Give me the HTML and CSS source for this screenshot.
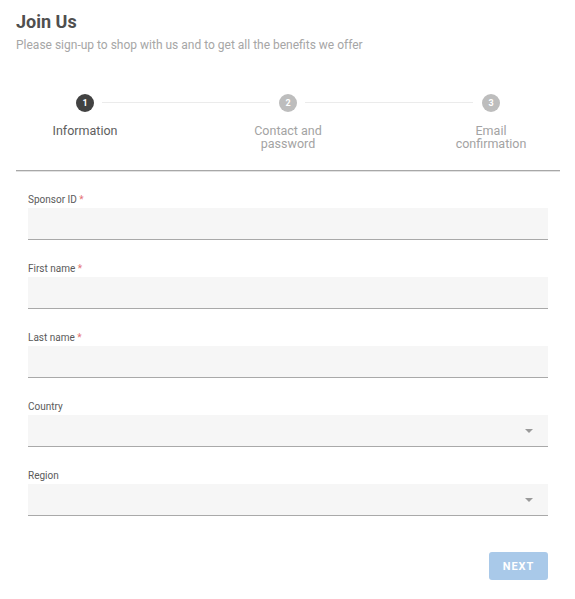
FILE: index.html
```html
<!DOCTYPE html>
<html>
<head>
<meta charset="utf-8">
<link rel="stylesheet" href="styles.css">
</head>
<body>
<div class="page">
  <h1 class="title">Join Us</h1>
  <p class="subtitle">Please sign-up to shop with us and to get all the benefits we offer</p>

  <div class="stepper">
    <div class="step active">
      <span class="circle">1</span>
      <span class="label">Information</span>
    </div>
    <div class="divider"></div>
    <div class="step">
      <span class="circle">2</span>
      <span class="label">Contact and<br>password</span>
    </div>
    <div class="divider"></div>
    <div class="step">
      <span class="circle">3</span>
      <span class="label">Email<br>confirmation</span>
    </div>
  </div>

  <form class="form">
    <div class="field">
      <label class="field-label">Sponsor ID <span class="req">*</span></label>
      <div class="input"></div>
    </div>
    <div class="field">
      <label class="field-label">First name <span class="req">*</span></label>
      <div class="input"></div>
    </div>
    <div class="field">
      <label class="field-label">Last name <span class="req">*</span></label>
      <div class="input"></div>
    </div>
    <div class="field">
      <label class="field-label">Country</label>
      <div class="input select"><span class="arrow"></span></div>
    </div>
    <div class="field">
      <label class="field-label">Region</label>
      <div class="input select"><span class="arrow"></span></div>
    </div>
    <div class="actions">
      <button type="button" class="next">NEXT</button>
    </div>
  </form>
</div>
</body>
</html>
```

FILE: styles.css
```css
* { box-sizing: border-box; }
html, body { margin: 0; padding: 0; background: #fff; }
body { font-family: Roboto, "Liberation Sans", Arial, sans-serif; }

.page { padding: 11px 15px 0 16px; width: 575px; }

.title {
  margin: 0;
  font-size: 18px;
  line-height: 21px;
  font-weight: 700;
  color: #4f4f4f;
}
.subtitle {
  margin: 6px 0 0;
  font-size: 12px;
  line-height: 14px;
  color: #a6a6a6;
}

.stepper {
  display: flex;
  align-items: flex-start;
  padding: 42px 0 20px;
  border-bottom: 1px solid #a8a8a8;
  position: relative;
}
.stepper::after {
  content: "";
  position: absolute;
  left: 0;
  right: 0;
  bottom: -2px;
  height: 1px;
  background: #e2e2e2;
}
.step {
  width: 138px;
  flex: none;
  display: flex;
  flex-direction: column;
  align-items: center;
  text-align: center;
}
.circle {
  width: 18px;
  height: 18px;
  border-radius: 50%;
  background: #bdbdbd;
  color: #fff;
  font-size: 9px;
  font-weight: 700;
  line-height: 18px;
  text-align: center;
}
.step.active .circle { background: #424242; }
.label {
  margin-top: 12px;
  font-size: 12.5px;
  line-height: 13px;
  color: #a3a3a3;
}
.step.active .label { color: #5e5e5e; }
.divider {
  flex: 1;
  height: 1px;
  margin: 8px -51px 0 -52px;
  background: #ebebeb;
}

.form { padding: 23px 12px 0; }
.field { margin-bottom: 23px; }
.field-label {
  display: block;
  font-size: 10px;
  line-height: 12px;
  color: #5a5a5a;
}
.req { color: #e57373; }
.input {
  margin-top: 2px;
  height: 32px;
  background: #f6f6f6;
  border-bottom: 1px solid #a9a9a9;
  position: relative;
}
.select { display: flex; align-items: center; justify-content: flex-end; padding-right: 15px; }
.arrow {
  width: 0;
  height: 0;
  border-left: 4px solid transparent;
  border-right: 4px solid transparent;
  border-top: 4px solid #9a9a9a;
}

.actions {
  display: flex;
  justify-content: flex-end;
  padding-top: 13px;
}
.next {
  width: 59px;
  height: 28px;
  border: none;
  border-radius: 3px;
  background: #a9c9e9;
  color: #fff;
  font-family: Roboto, "Liberation Sans", Arial, sans-serif;
  font-size: 11px;
  font-weight: 700;
  letter-spacing: 1px;
  padding: 0;
}
```
